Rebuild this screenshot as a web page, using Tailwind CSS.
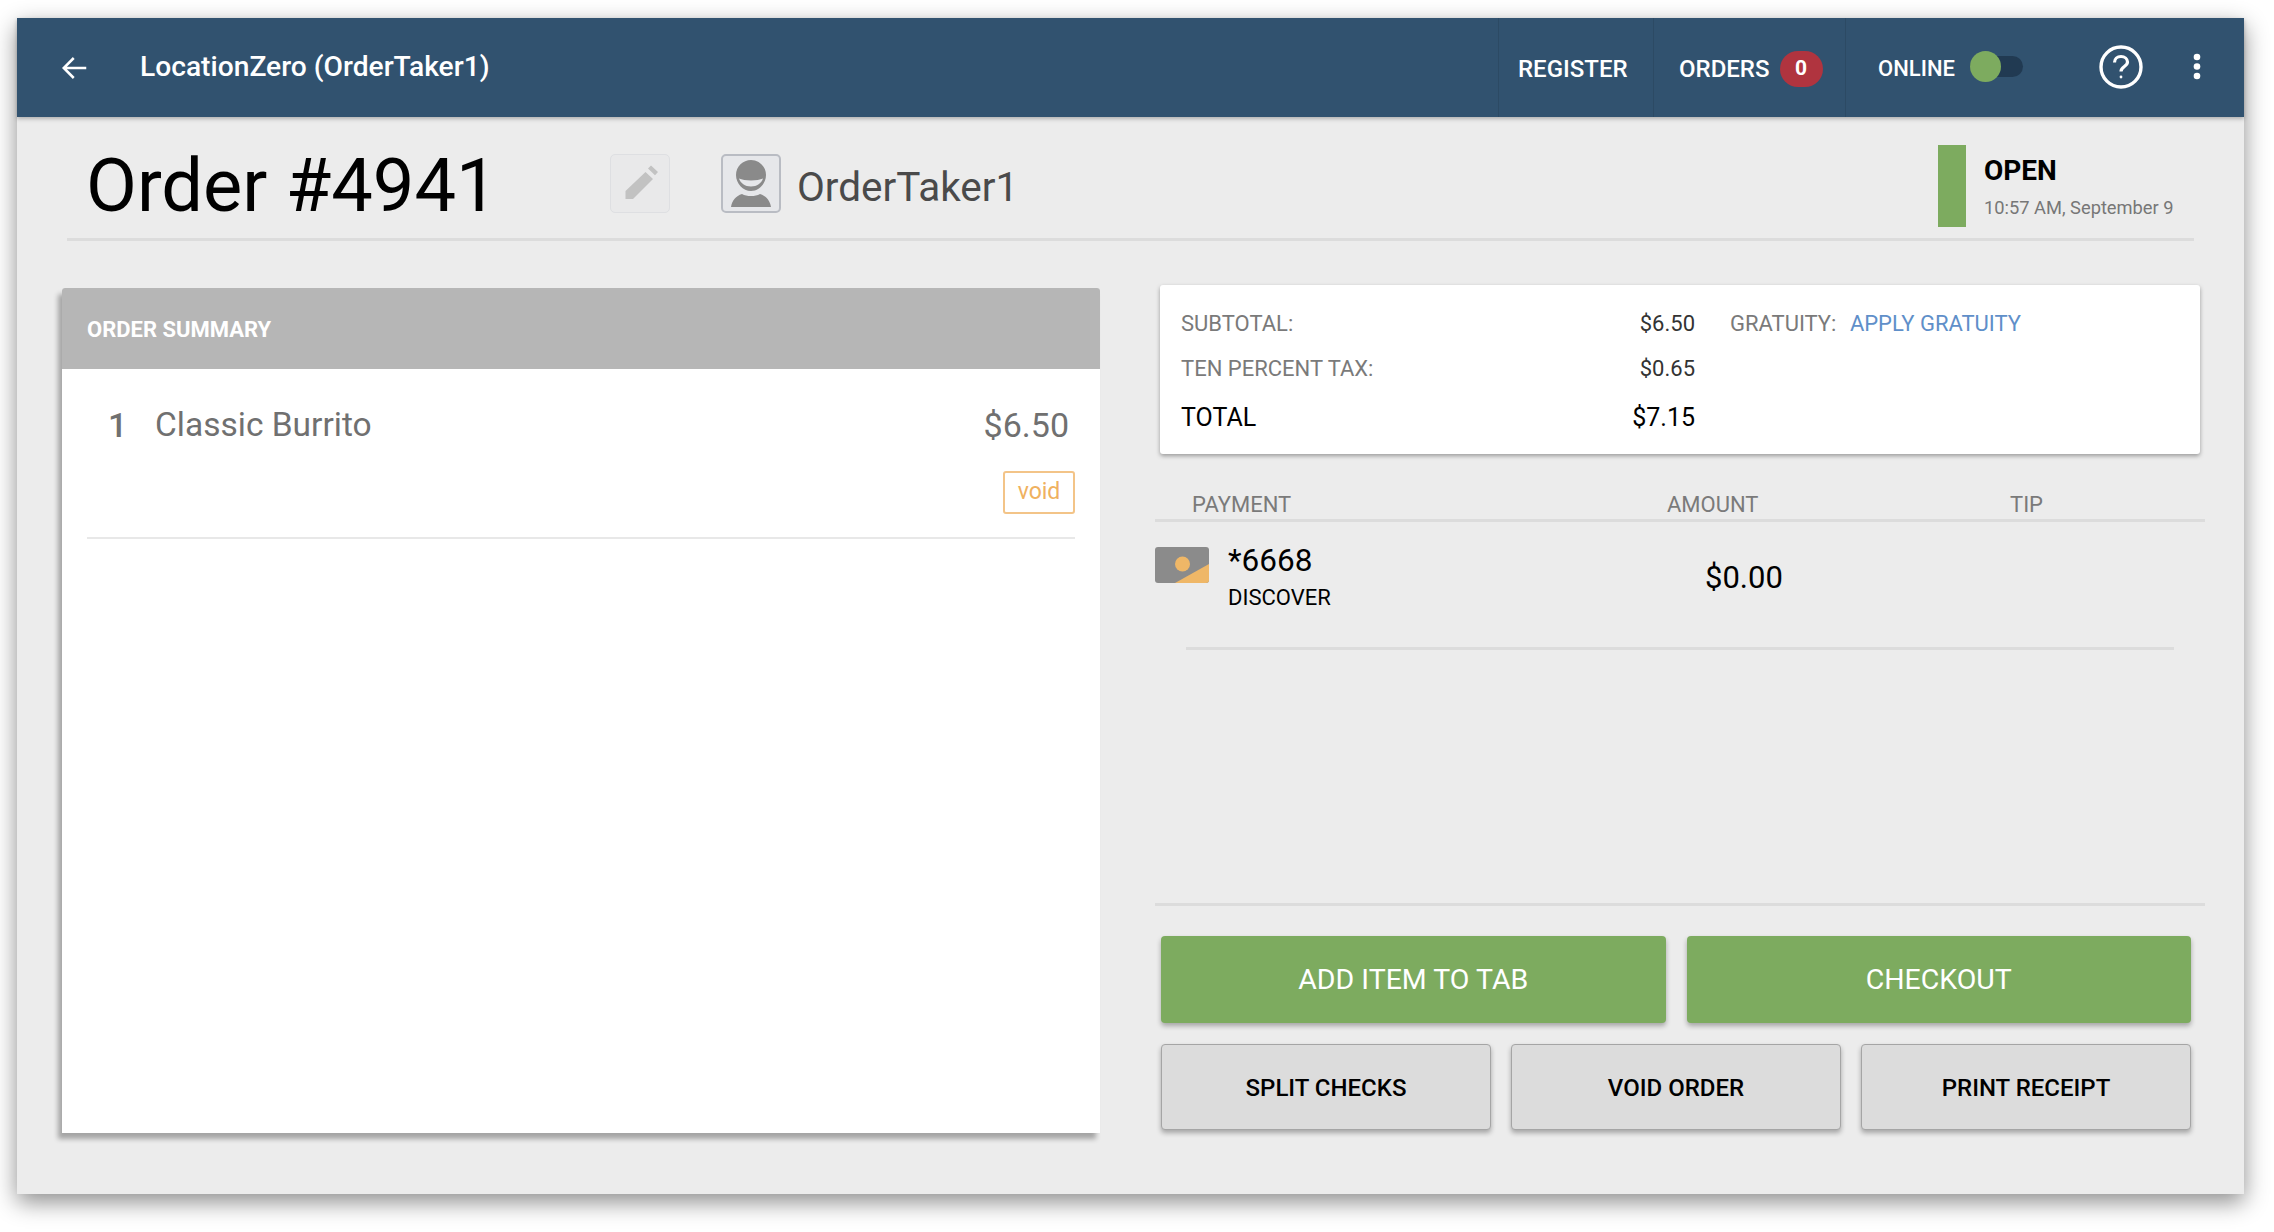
<!DOCTYPE html>
<html lang="en">
<head>
  <meta charset="UTF-8">
  <title>Order #4941</title>
  <script src="https://cdn.jsdelivr.net/npm/@tailwindcss/browser@4"></script>
</head>
<body class="bg-white w-[2274px] h-[1232px] overflow-hidden pt-[18px] pl-[17px] font-['Roboto',sans-serif]">
  <div class="w-[2227px] h-[1176px] bg-[#ececec] flex flex-col shadow-[0_8px_22px_rgba(0,0,0,0.45)]">

    <!-- top bar -->
    <header class="h-[99px] shrink-0 bg-[#31526f] flex items-center text-white shadow-[0_2px_4px_rgba(0,0,0,0.25)] relative">
      <svg class="ml-[43px] w-[30px] h-[30px]" viewBox="0 0 24 24" fill="none" stroke="white" stroke-width="2"><path d="M21 12H3.500M11 4l-8 8 8 8"/></svg>
      <h1 class="ml-[50px] text-[28.200px] font-medium">LocationZero (OrderTaker1)</h1>
      <nav class="ml-auto flex items-center h-full text-[24px] font-medium">
        <a class="h-full flex items-center border-l border-[#2c4a64] pl-[19px] pt-[2px] w-[155px]">REGISTER</a>
        <a class="h-full flex items-center border-l border-[#2c4a64] pl-[25px] pt-[2px] w-[192px]">ORDERS
          <span class="ml-[10px] w-[43px] h-[36px] rounded-full bg-[#b0343f] flex items-center justify-center text-[21px] font-bold">0</span>
        </a>
        <div class="h-full flex items-center border-l border-[#2c4a64] pl-[32px] w-[399px]">
          <span class="w-[77px] text-[22px] pt-[2px] whitespace-nowrap">ONLINE</span>
          <div class="relative ml-[15px] w-[53px] h-[21px] rounded-full bg-[#213a52] -mt-[2px]">
            <div class="absolute left-0 -top-[5px] w-[31px] h-[31px] rounded-full bg-[#7dab5f]"></div>
          </div>
          <svg class="ml-[76px] -mt-[2px] w-[44px] h-[44px]" viewBox="0 0 44 44" fill="none" stroke="white" stroke-width="3.400"><circle cx="22" cy="22" r="20"/><path stroke-width="3.200" d="M15.500 17.500c0-3.600 2.800-6 6.500-6s6.500 2.400 6.500 5.600c0 4.400-6.500 4.600-6.500 9.400"/><circle cx="22" cy="32" r="1.400" fill="white" stroke="none"/></svg>
          <svg class="ml-[50px] -mt-[2px] w-[8px] h-[30px]" viewBox="0 0 8 30" fill="white"><circle cx="4" cy="5" r="3.300"/><circle cx="4" cy="14.500" r="3.300"/><circle cx="4" cy="24" r="3.300"/></svg>
        </div>
      </nav>
    </header>

    <!-- order heading -->
    <div class="h-[124px] shrink-0 mx-[50px] pt-[12px] border-b-[3px] border-[#dcdcdc] flex items-center">
      <div class="ml-[19px] w-[524px] pt-[5px] text-[74px] leading-none text-black">Order #4941</div>
      <button class="w-[60px] h-[59px] rounded-[5px] border border-[#dedfe2] bg-[#e9e9ea] flex items-center justify-center">
        <svg class="w-[38px] h-[40px]" viewBox="0 0 38 40" fill="#c2c2c2"><path d="M24.500 8L32 15 12 35H4.500v-8zM27 4.500l3-3 7 6.500-3 3.200z"/></svg>
      </button>
      <button class="ml-[51px] w-[60px] h-[59px] rounded-[5px] border-2 border-[#b9bcc3] bg-[#e6e7ea] flex items-center justify-center">
        <svg class="w-[42px] h-[50px]" viewBox="0 0 42 50" fill="#8a8a8a"><path fill-rule="evenodd" d="M21 1c8 0 15 6.500 15 15s-7 16-15 16S6 24.500 6 16 13 1 21 1zM9 19.500c1.500 4.500 6 8 12 8s10.500-3.500 12-8c-3 1.300-7 2-12 2s-9-.7-12-2z"/><path d="M1 48c1-6.500 5-11 11-13 2.500 1.500 5.500 2 9 2s6.500-.5 9-2c6 2 10 6.500 11 13z"/></svg>
      </button>
      <span class="ml-[16px] text-[40.500px] text-[#4a4a4a] pt-[7px]">OrderTaker1</span>
      <div class="ml-auto flex items-stretch h-[82px] mt-[4px]">
        <div class="w-[28px] bg-[#7dab5f]"></div>
        <div class="ml-[18px] w-[210px] pt-[2px] flex flex-col justify-center">
          <div class="text-[28px] leading-[34px] font-bold text-black">OPEN</div>
          <div class="text-[18.300px] leading-[24px] mt-[8px] text-[#777] whitespace-nowrap">10:57 AM, September 9</div>
        </div>
      </div>
    </div>

    <main class="flex items-start pl-[45px] pt-[44px] gap-[55px]">
      <!-- summary -->
      <section class="mt-[3px] w-[1038px] h-[845px] shrink-0 bg-white rounded-t-[3px] shadow-[-4px_6px_5px_rgba(0,0,0,0.3)]">
        <div class="h-[81px] bg-[#b6b6b6] rounded-t-[3px] flex items-center pl-[25px] pt-[2px] text-[22px] font-bold text-white">ORDER SUMMARY</div>
        <div class="mx-[25px] h-[170px] border-b-2 border-[#e8e8e8] pt-[35px]">
          <div class="flex items-center text-[34px] leading-[42px] text-[#707070]">
            <span class="w-[21px] ml-[21px] font-medium">1</span>
            <span class="ml-[26px] text-[33.500px]">Classic Burrito</span>
            <span class="ml-auto mr-[6px]">$6.50</span>
          </div>
          <div class="flex justify-end mt-[25px]">
            <button class="w-[72px] h-[43px] rounded-[3px] border-2 border-[#f3c488] text-[#efb15f] text-[23px]">void</button>
          </div>
        </div>
      </section>

      <!-- totals and payments -->
      <section class="w-[1050px] shrink-0">
        <div class="mx-[5px] h-[169px] bg-white rounded-[3px] shadow-[0_2px_4px_rgba(0,0,0,0.35)] pl-[21px] pt-[16px] text-[22px] grid grid-cols-[514px_1fr] grid-rows-[45px_45px_52px] items-center">
          <div class="flex justify-between text-[#7a7a7a]"><span>SUBTOTAL:</span><span class="text-[#333]">$6.50</span></div>
          <div class="pl-[35px] text-[#7a7a7a]">GRATUITY: <a class="ml-[8px] text-[#5f8fc9]">APPLY GRATUITY</a></div>
          <div class="flex justify-between text-[#7a7a7a]"><span>TEN PERCENT TAX:</span><span class="text-[#333]">$0.65</span></div>
          <div></div>
          <div class="flex justify-between items-center text-black text-[25px] pt-[2px]"><span>TOTAL</span><span>$7.15</span></div>
        </div>

        <div class="mt-[30px] h-[38px] pt-[4px] border-b-[3px] border-[#dcdcdc] grid grid-cols-[512px_343px_1fr] items-center text-[22px] text-[#7a7a7a]">
          <span class="pl-[37px]">PAYMENT</span><span>AMOUNT</span><span>TIP</span>
        </div>

        <div class="h-[125px] grid grid-cols-[550px_1fr] items-start">
          <div class="flex items-start pt-[25px]">
            <svg class="w-[54px] h-[36px]" viewBox="0 0 54 36"><rect width="54" height="36" rx="3" fill="#8b8b8b"/><path d="M20 36L54 17v16a3 3 0 0 1-3 3z" fill="#efb767"/><circle cx="27.500" cy="17" r="7.500" fill="#efb767"/></svg>
            <div class="ml-[19px] text-black -mt-[6px]">
              <div class="text-[31.500px] leading-[40px]">*6668</div>
              <div class="text-[22px] leading-[28px] mt-[3px]">DISCOVER</div>
            </div>
          </div>
          <div class="pt-[38px] text-[31px] leading-[36px] text-black">$0.00</div>
        </div>
        <div class="mx-[31px] h-[3px] bg-[#dcdcdc]"></div>

        <div class="mt-[253px] h-[3px] bg-[#dcdcdc]"></div>

        <div class="mt-[30px] pl-[6px] pr-[14px] grid grid-cols-2 gap-x-[21px]">
          <button class="h-[87px] pt-[2px] rounded-[4px] bg-[#7dab5f] text-white text-[28.500px] shadow-[0_3px_5px_rgba(0,0,0,0.3)]">ADD ITEM TO TAB</button>
          <button class="h-[87px] pt-[2px] rounded-[4px] bg-[#7dab5f] text-white text-[28.500px] shadow-[0_3px_5px_rgba(0,0,0,0.3)]">CHECKOUT</button>
        </div>
        <div class="mt-[21px] pl-[6px] pr-[14px] grid grid-cols-3 gap-x-[20px]">
          <button class="h-[86px] pt-[2px] rounded-[4px] bg-[#dcdcdc] border border-[#a5a5a5] text-black text-[24px] font-medium shadow-[0_3px_5px_rgba(0,0,0,0.3)]">SPLIT CHECKS</button>
          <button class="h-[86px] pt-[2px] rounded-[4px] bg-[#dcdcdc] border border-[#a5a5a5] text-black text-[24px] font-medium shadow-[0_3px_5px_rgba(0,0,0,0.3)]">VOID ORDER</button>
          <button class="h-[86px] pt-[2px] rounded-[4px] bg-[#dcdcdc] border border-[#a5a5a5] text-black text-[24px] font-medium shadow-[0_3px_5px_rgba(0,0,0,0.3)]">PRINT RECEIPT</button>
        </div>
      </section>
    </main>
  </div>
</body>
</html>
